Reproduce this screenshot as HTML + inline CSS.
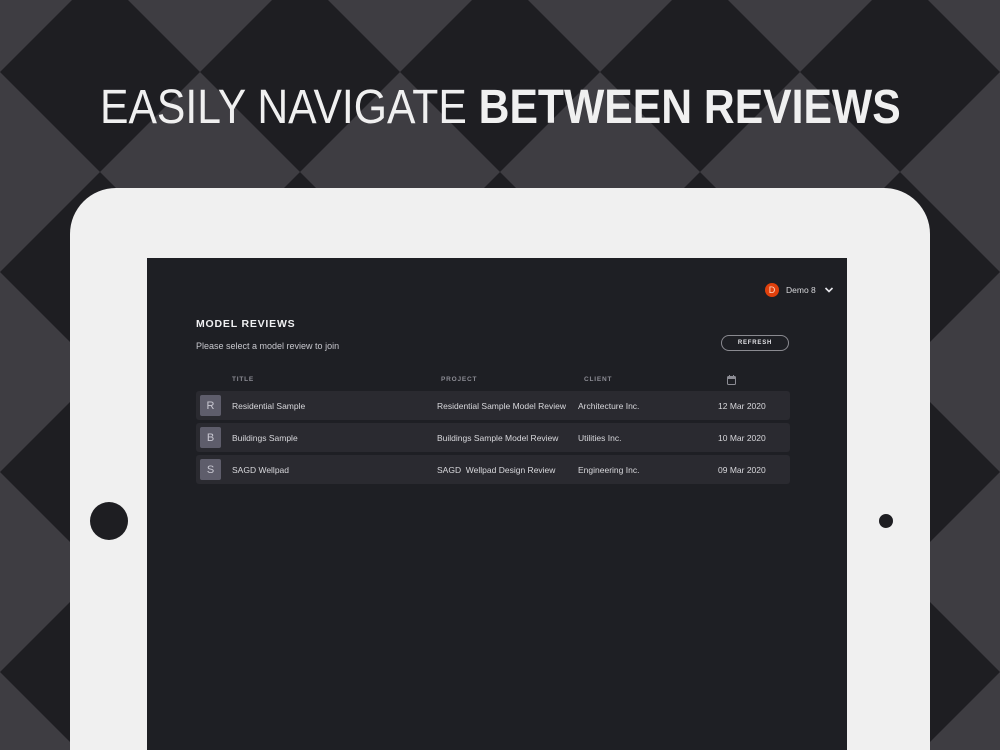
<!DOCTYPE html>
<html style="width:1000px;height:750px;overflow:hidden"><head><meta charset="utf-8"><style>
*{margin:0;padding:0;box-sizing:border-box}
body{width:1000px;height:750px;overflow:hidden;position:relative;background:#3e3d42;font-family:"Liberation Sans",sans-serif}
.abs{position:absolute}
.t{position:absolute;white-space:nowrap;color:#d8d8dc;font-size:8.5px;line-height:10px}
.row{position:absolute;left:196px;width:594px;height:29px;background:#2a2a30;border-radius:3px}
.av{position:absolute;left:4px;top:4px;width:21px;height:21px;background:#5e5d6b;border-radius:2px;color:#c9c8d2;font-size:11px;display:flex;align-items:center;justify-content:center}
.h{position:absolute;top:376px;font-size:6.5px;font-weight:bold;letter-spacing:0.8px;color:#8c8c94}
</style></head><body>
<svg class="abs" style="left:0;top:0" width="1000" height="750" fill="#1e1e22">
<rect width="1000" height="750" fill="#3e3d42"/>
<polygon points="100,-28 200,72 100,172 0,72"/>
<polygon points="300,-28 400,72 300,172 200,72"/>
<polygon points="500,-28 600,72 500,172 400,72"/>
<polygon points="700,-28 800,72 700,172 600,72"/>
<polygon points="900,-28 1000,72 900,172 800,72"/>
<polygon points="100,172 200,272 100,372 0,272"/>
<polygon points="300,172 400,272 300,372 200,272"/>
<polygon points="500,172 600,272 500,372 400,272"/>
<polygon points="700,172 800,272 700,372 600,272"/>
<polygon points="900,172 1000,272 900,372 800,272"/>
<polygon points="100,372 200,472 100,572 0,472"/>
<polygon points="300,372 400,472 300,572 200,472"/>
<polygon points="500,372 600,472 500,572 400,472"/>
<polygon points="700,372 800,472 700,572 600,472"/>
<polygon points="900,372 1000,472 900,572 800,472"/>
<polygon points="100,572 200,672 100,772 0,672"/>
<polygon points="300,572 400,672 300,772 200,672"/>
<polygon points="500,572 600,672 500,772 400,672"/>
<polygon points="700,572 800,672 700,772 600,672"/>
<polygon points="900,572 1000,672 900,772 800,672"/>
</svg>
<div class="abs" style="left:100px;top:80px;width:820px;height:56px;color:#f0f0f0;font-size:48px;white-space:nowrap;line-height:56px">
<span style="display:inline-block;transform-origin:0 0;transform:scaleX(0.889)">EASILY NAVIGATE <b>BETWEEN REVIEWS</b></span></div>
<div class="abs" style="left:70px;top:188px;width:860px;height:562px;background:#f0f0f0;border-radius:46px 46px 0 0"></div>
<div class="abs" style="left:90px;top:502px;width:38px;height:38px;border-radius:50%;background:#1e1e22"></div>
<div class="abs" style="left:879px;top:514px;width:14px;height:14px;border-radius:50%;background:#1e1e22"></div>
<div class="abs" style="left:147px;top:258px;width:700px;height:492px;background:#1e1f24"></div>
<div class="abs" style="left:765px;top:283px;width:14px;height:14px;border-radius:50%;background:#e0400c;color:#fbd9c8;font-size:9px;text-align:center;line-height:14px">D</div>
<div class="t" style="left:786px;top:285px">Demo 8</div>
<svg class="abs" style="left:824px;top:286px" width="10" height="8"><path d="M1.5 2 L5 5.5 L8.5 2" stroke="#e8e8ec" stroke-width="1.6" fill="none"/></svg>
<div class="t" style="left:196px;top:318px;font-size:10.5px;line-height:12px;font-weight:bold;letter-spacing:0.8px;color:#f0f0f2">MODEL REVIEWS</div>
<div class="t" style="left:196px;top:341px;font-size:9px;color:#c8c8ce">Please select a model review to join</div>
<div class="abs" style="left:721px;top:335px;width:68px;height:16px;border:1px solid #8a8a90;border-radius:8px;color:#e0e0e4;font-size:6px;font-weight:bold;letter-spacing:0.8px;text-align:center;line-height:14px">REFRESH</div>
<div class="h" style="left:232px">TITLE</div>
<div class="h" style="left:441px">PROJECT</div>
<div class="h" style="left:584px">CLIENT</div>
<svg class="abs" style="left:727px;top:375px" width="9" height="10"><rect x="0.5" y="1.5" width="8" height="8" rx="1" fill="none" stroke="#8c8c94"/><rect x="0.5" y="1.5" width="8" height="2.5" fill="#8c8c94"/><rect x="2" y="0" width="1" height="2" fill="#8c8c94"/><rect x="6" y="0" width="1" height="2" fill="#8c8c94"/></svg>
<div class="row" style="top:391px"><div class="av">R</div><div class="t" style="left:36px;top:10px">Residential Sample</div><div class="t" style="left:241px;top:10px">Residential Sample Model Review</div><div class="t" style="left:382px;top:10px">Architecture Inc.</div><div class="t" style="left:522px;top:10px">12 Mar 2020</div></div>
<div class="row" style="top:423px"><div class="av">B</div><div class="t" style="left:36px;top:10px">Buildings Sample</div><div class="t" style="left:241px;top:10px">Buildings Sample Model Review</div><div class="t" style="left:382px;top:10px">Utilities Inc.</div><div class="t" style="left:522px;top:10px">10 Mar 2020</div></div>
<div class="row" style="top:455px"><div class="av">S</div><div class="t" style="left:36px;top:10px">SAGD Wellpad</div><div class="t" style="left:241px;top:10px">SAGD&nbsp; Wellpad Design Review</div><div class="t" style="left:382px;top:10px">Engineering Inc.</div><div class="t" style="left:522px;top:10px">09 Mar 2020</div></div>
</body></html>
